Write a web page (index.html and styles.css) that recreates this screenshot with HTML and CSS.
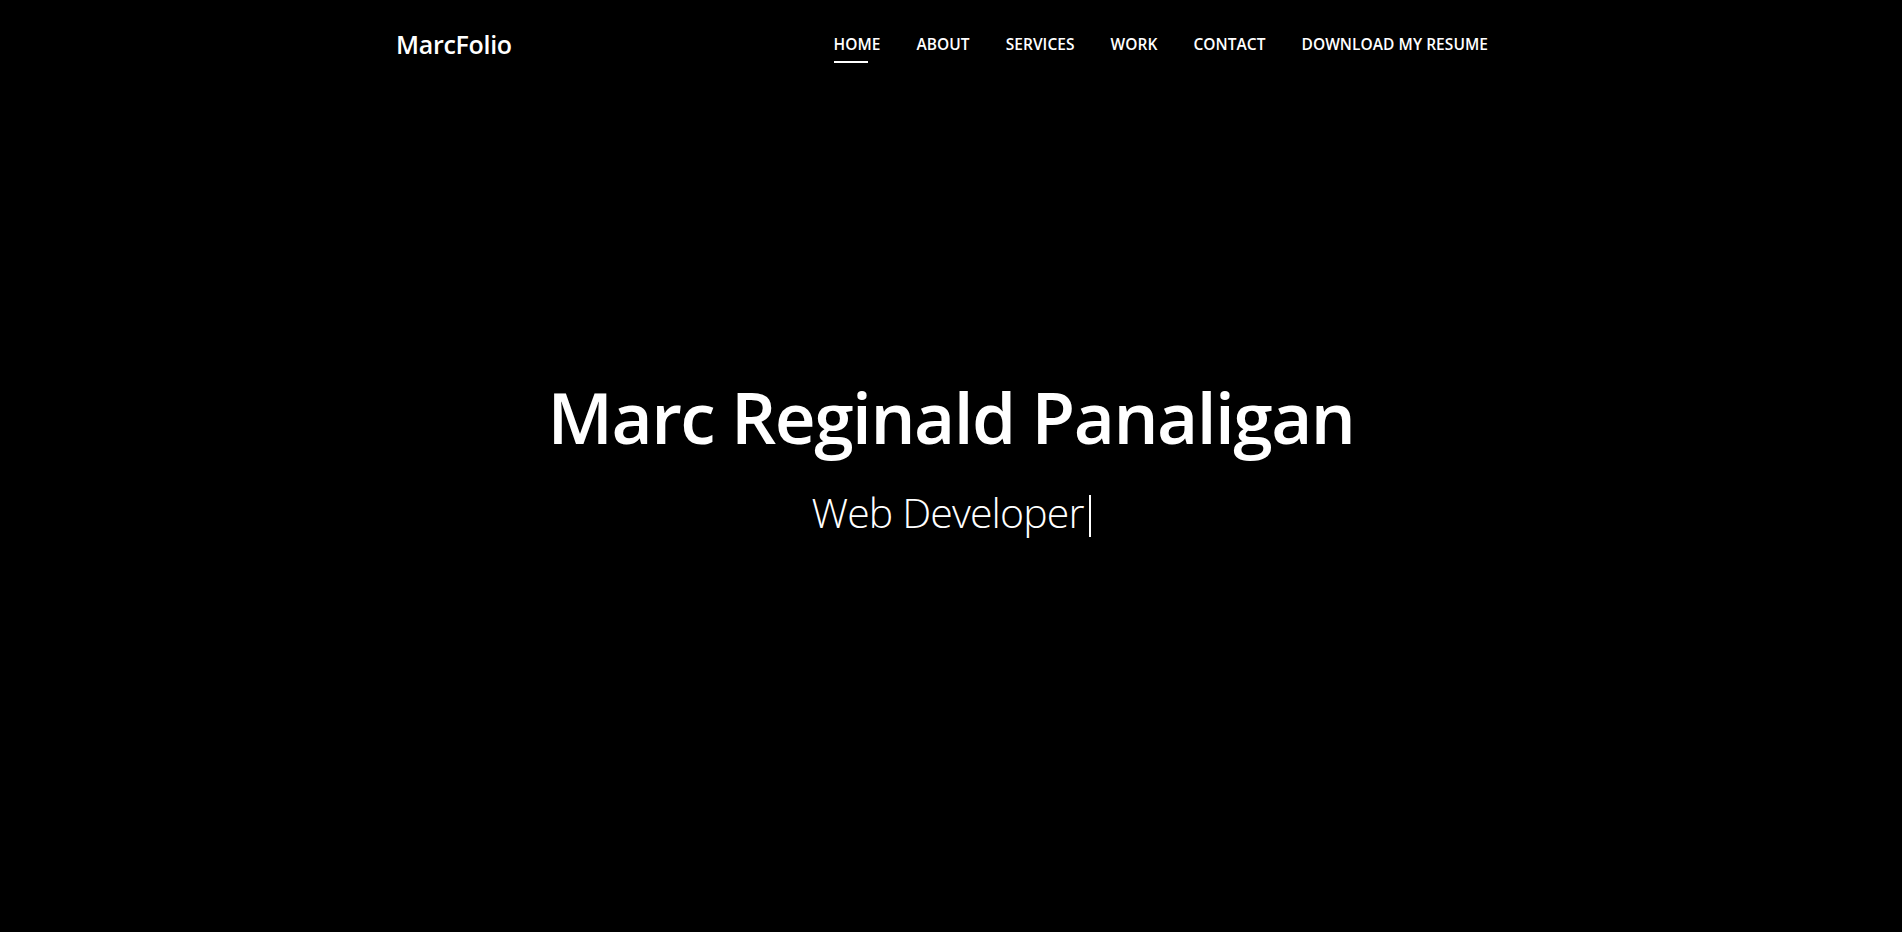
FILE: index.html
```html
<!DOCTYPE html>
<html lang="en">
<head>
<meta charset="utf-8">
<title>MarcFolio</title>
<link rel="stylesheet" href="styles.css">
</head>
<body>
<header class="header">
  <div class="container nav-bar">
    <a class="logo" href="#">MarcFolio</a>
    <nav class="nav">
      <a class="nav-link active" href="#">HOME</a>
      <a class="nav-link" href="#">ABOUT</a>
      <a class="nav-link" href="#">SERVICES</a>
      <a class="nav-link" href="#">WORK</a>
      <a class="nav-link" href="#">CONTACT</a>
      <a class="nav-link" href="#">DOWNLOAD MY RESUME</a>
    </nav>
  </div>
</header>
<main class="hero">
  <h1 class="hero-title">Marc Reginald Panaligan</h1>
  <p class="hero-sub"><span class="typed">Web Developer</span><span class="cursor" aria-hidden="true"></span></p>
</main>
</body>
</html>
```
FILE: styles.css
```css
* { box-sizing: border-box; }
html, body { margin: 0; padding: 0; }
body {
  background: #000;
  color: #fff;
  font-family: "Open Sans", "Noto Sans", "Liberation Sans", sans-serif;
  height: 932px;
  overflow: hidden;
}
a { color: #fff; text-decoration: none; }
.header {
  position: absolute;
  top: 0; left: 0; right: 0;
  z-index: 2;
}
.container {
  width: 1110px;
  margin: 0 auto;
}
.nav-bar {
  display: flex;
  justify-content: space-between;
  align-items: center;
  height: 88px;
  padding-right: 18px;
}
.logo {
  font-size: 25px;
  font-weight: 600;
  letter-spacing: -0.3px;
}
.nav {
  display: flex;
  gap: 36px;
}
.nav-link {
  position: relative;
  font-size: 15.5px;
  font-weight: 600;
  letter-spacing: 0.05px;
  padding: 8px 0;
}
.nav-link.active::after {
  content: "";
  position: absolute;
  left: 0;
  bottom: 0;
  width: 34px;
  height: 2px;
  background: #fff;
}
.hero {
  height: 932px;
  padding-bottom: 21px;
  display: flex;
  flex-direction: column;
  align-items: center;
  justify-content: center;
}
.hero-title {
  margin: 0;
  font-size: 71px;
  font-weight: 600;
  letter-spacing: -1.5px;
  line-height: 1.2;
}
.hero-sub {
  display: flex;
  align-items: center;
  margin: 29px 0 0;
  font-size: 41px;
  font-weight: 300;
  letter-spacing: -0.85px;
  line-height: 1.2;
}
.cursor {
  display: inline-block;
  width: 2px;
  height: 42px;
  margin-left: 5px;
  margin-top: 6px;
  background: #fff;
}
```
